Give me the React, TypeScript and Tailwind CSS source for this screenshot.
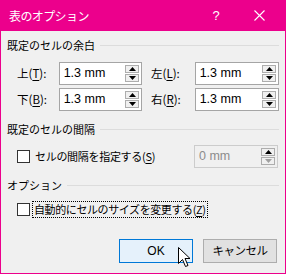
const jp = "font-['Noto_Sans_CJK_JP','Noto_Sans',sans-serif]";

function SpinButtons({ disabled = false }: { disabled?: boolean }) {
  return (
    <div className="flex flex-col gap-[1px]">
      <div className="flex h-[8px] w-[14px] items-center justify-center border border-[#adadad] bg-[#f0f0f0]">
        <svg width="7" height="4" viewBox="0 0 7 4">
          <path d="M0 4 L3.5 0 L7 4 Z" fill="#000" />
        </svg>
      </div>
      <div className="flex h-[8px] w-[14px] items-center justify-center border border-[#adadad] bg-[#f0f0f0]">
        <svg width="7" height="4" viewBox="0 0 7 4">
          <path d="M0 0 L3.5 4 L7 0 Z" fill={disabled ? "#a0a0a0" : "#000"} />
        </svg>
      </div>
    </div>
  );
}

function SpinInput({
  value,
  width,
  disabled = false,
}: {
  value: string;
  width: string;
  disabled?: boolean;
}) {
  return (
    <div
      className={`flex h-[23px] ${width} items-center justify-between border pl-[4px] pr-[2px] ${
        disabled ? "border-[#cccccc] bg-[#f0f0f0] text-[#8c8c8c]" : "border-[#a5a5a5] bg-white text-black"
      }`}
    >
      <span className="font-['Liberation_Sans',sans-serif] text-[12.5px] leading-none">{value}</span>
      <SpinButtons disabled={disabled} />
    </div>
  );
}

function SectionHeader({ title }: { title: string }) {
  return (
    <div className="flex h-[16px] items-center gap-[5px]">
      <span className="text-[11px] leading-none">{title}</span>
      <div className="h-px flex-1 bg-[#dcdcdc]" />
    </div>
  );
}

function Mnemonic({ pre, k, post = ")" }: { pre: string; k: string; post?: string }) {
  return (
    <span>
      {pre}(<span className="underline underline-offset-2">{k}</span>
      {post}
    </span>
  );
}

function MarginRow({
  leftLabel,
  leftKey,
  rightLabel,
  rightKey,
}: {
  leftLabel: string;
  leftKey: string;
  rightLabel: string;
  rightKey: string;
}) {
  return (
    <div className="flex items-center pl-[10px]">
      <div className="w-[42px] text-[11.5px]">
        <Mnemonic pre={leftLabel} k={leftKey} post="):" />
      </div>
      <SpinInput value="1.3 mm" width="w-[84px]" />
      <div className="ml-[9px] w-[44px] text-[11.5px]">
        <Mnemonic pre={rightLabel} k={rightKey} post="):" />
      </div>
      <SpinInput value="1.3 mm" width="w-[85px]" />
    </div>
  );
}

function Checkbox() {
  return <div className="h-[13px] w-[13px] border border-[#333333] bg-white" />;
}

export default function App() {
  return (
    <div className={`relative flex h-[274px] w-[286px] flex-col border-x border-b border-[#ec008c] bg-[#f0f0f0] text-black ${jp}`}>
      <div className="-mx-px flex h-[31px] shrink-0 items-center bg-[#ec008c] pl-[9px] text-white">
        <span className="text-[12px] tracking-[-0.6px]">表のオプション</span>
        <span className="ml-auto w-[20px] text-center font-['Liberation_Sans',sans-serif] text-[13px]">?</span>
        <div className="ml-[23px] mr-[17px] flex w-[20px] justify-center">
          <svg width="11" height="11" viewBox="0 0 11 11">
            <path d="M0.5 0.5 L10.5 10.5 M10.5 0.5 L0.5 10.5" stroke="#fff" strokeWidth="1.1" />
          </svg>
        </div>
      </div>

      <div className="flex flex-1 flex-col pl-[6px] pr-[6px] pt-[6px]">
        <SectionHeader title="既定のセルの余白" />
        <div className="mt-[9px] flex flex-col gap-[3px]">
          <MarginRow leftLabel="上" leftKey="T" rightLabel="左" rightKey="L" />
          <MarginRow leftLabel="下" leftKey="B" rightLabel="右" rightKey="R" />
        </div>

        <div className="mt-[10px]">
          <SectionHeader title="既定のセルの間隔" />
        </div>
        <div className="mt-[8px] flex items-center pl-[10px]">
          <Checkbox />
          <span className="ml-[5px] text-[11px] tracking-[-0.3px]">
            <Mnemonic pre="セルの間隔を指定する" k="S" />
          </span>
          <div className="ml-auto mr-[1px]">
            <SpinInput value="0 mm" width="w-[84px]" disabled />
          </div>
        </div>

        <div className="mt-[9px]">
          <SectionHeader title="オプション" />
        </div>
        <div className="mt-[8px] flex items-center pl-[10px]">
          <Checkbox />
          <span className="ml-[2px] border border-dotted border-black px-[1px] text-[11px] leading-[15px] tracking-[-0.4px]">
            <Mnemonic pre="自動的にセルのサイズを変更する" k="Z" />
          </span>
        </div>

        <div className="mt-auto mb-[10px] flex justify-end gap-[10px] pr-[2px]">
          <button className="h-[24px] w-[74px] border border-[#0078d7] bg-[#e5f1fb] font-['Liberation_Sans',sans-serif] text-[12px]">
            OK
          </button>
          <button className="h-[24px] w-[74px] border border-[#adadad] bg-[#e1e1e1] text-[11.5px] tracking-[-0.5px]">
            キャンセル
          </button>
        </div>
      </div>

      <svg className="absolute left-[177px] top-[247px]" width="13" height="21" viewBox="0 0 13 21">
        <path
          d="M0.5 0.5 L0.5 16.5 L4.5 12.5 L7.5 19.5 L10 18.5 L7 11.5 L12 11.5 Z"
          fill="#fff"
          stroke="#000"
          strokeWidth="1"
        />
      </svg>
    </div>
  );
}
